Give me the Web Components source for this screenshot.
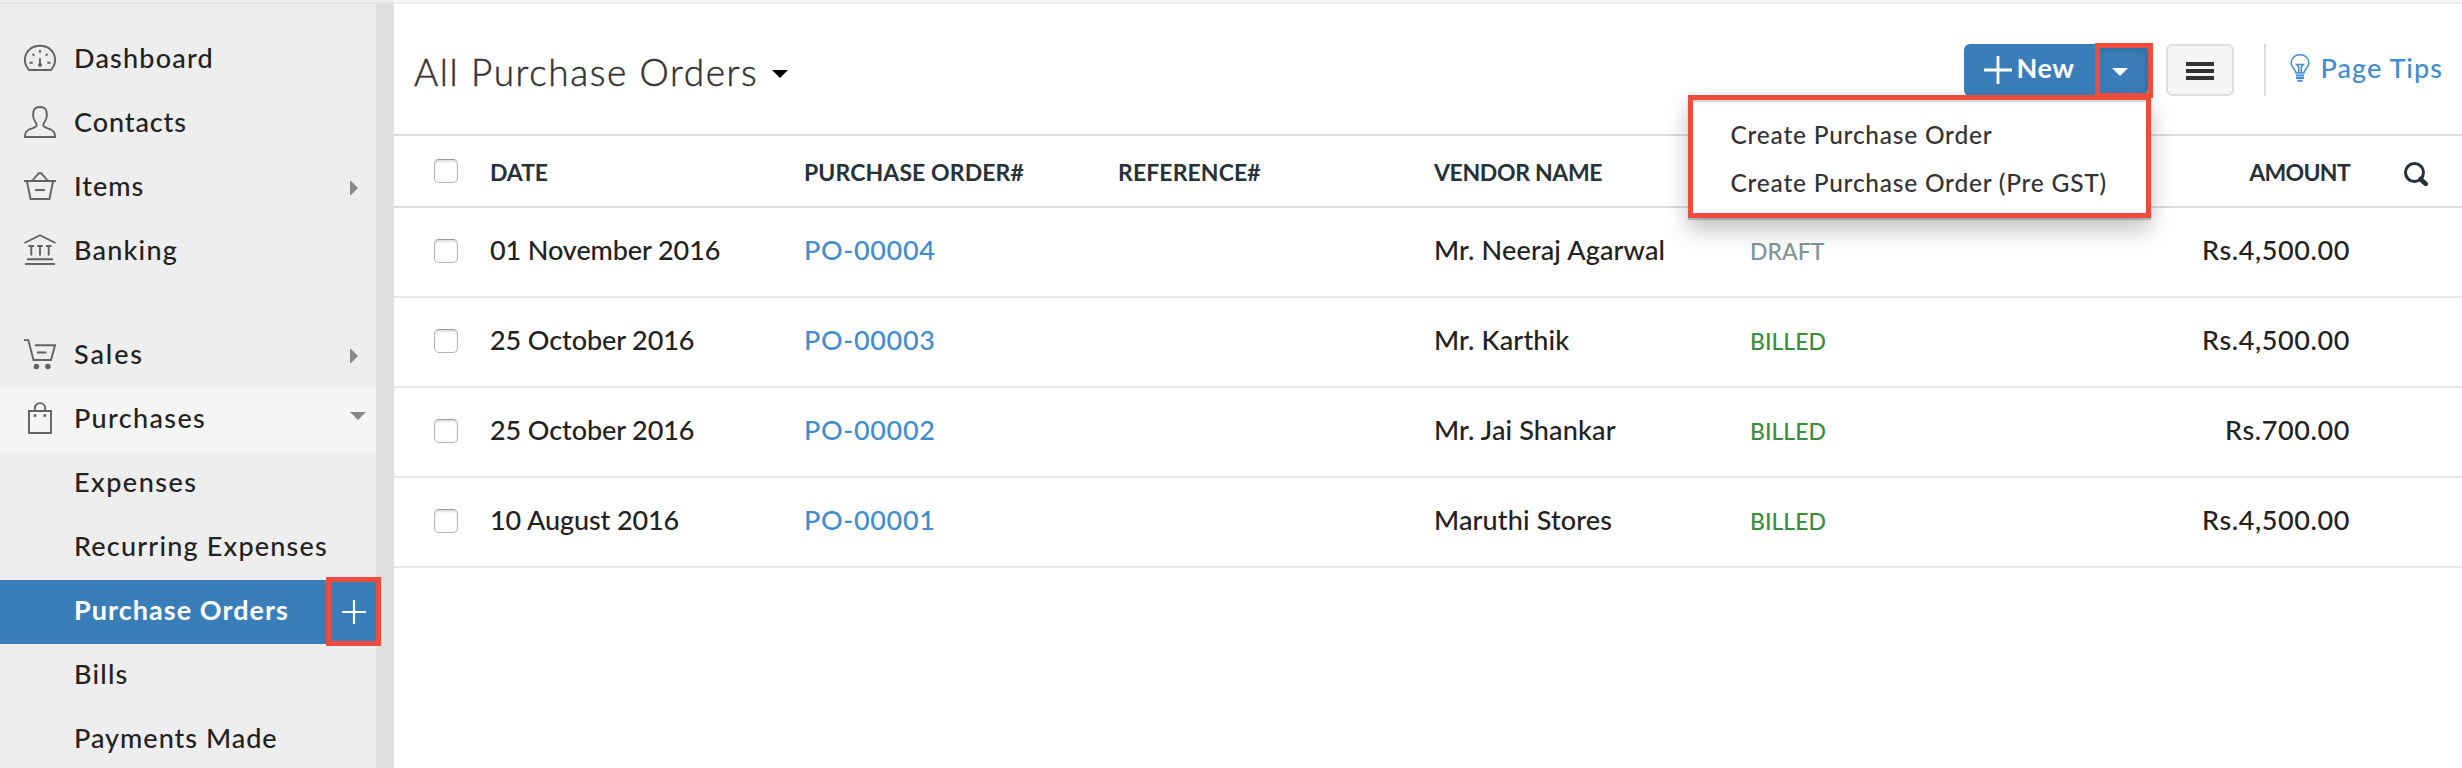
<!DOCTYPE html>
<html lang="en">
<head>
<meta charset="utf-8">
<title>Purchase Orders</title>
<style>
  html, body { margin: 0; height: 100%; }
  body {
    background: #fff;
    color: #222;
    font: 500 27px/1.2 Lato, "Liberation Sans", sans-serif;
    overflow: hidden;
  }
</style>
</head>
<body>
<books-app>
  <side-nav slot="nav">
    <nav-item icon="dashboard">Dashboard</nav-item>
    <nav-item icon="contacts" style="--track: .9px">Contacts</nav-item>
    <nav-item icon="items" caret="right" style="--track: 1px">Items</nav-item>
    <nav-item icon="banking">Banking</nav-item>
    <nav-item icon="sales" caret="right" class="gap" style="--track: 1.9px">Sales</nav-item>
    <nav-item icon="purchases" caret="down" open style="--track: 1.35px">Purchases</nav-item>
    <nav-item style="--track: 1.5px">Expenses</nav-item>
    <nav-item>Recurring Expenses</nav-item>
    <nav-item active style="--track: 1.05px">Purchase Orders</nav-item>
    <nav-item>Bills</nav-item>
    <nav-item style="--track: 1px">Payments Made</nav-item>
  </side-nav>
  <list-header slot="header">
    All Purchase Orders
    <new-button slot="actions">
      New
      <menu-item slot="menu">Create Purchase Order</menu-item>
      <menu-item slot="menu">Create Purchase Order (Pre GST)</menu-item>
    </new-button>
    <list-options slot="actions"></list-options>
    <page-tips slot="actions">Page Tips</page-tips>
  </list-header>
  <order-table></order-table>
</books-app>

<script>
const ICONS = {
  dashboard: `<path d="M5 26C2 22.500 .9 19.500 .9 16C.9 7.500 7.500 1.800 16 1.800S31.100 7.500 31.100 16C31.100 19.500 30 22.500 27 26Z"/>
    <path d="M16 6v3M8.500 9.800l1.800 1.800M23.500 9.800l-1.800 1.800M5.500 18.700h3.200M23.300 18.700h3.200M16 14v6"/>
    <circle cx="16" cy="21" r="2" fill="currentColor" stroke="none"/>`,
  contacts: `<path d="M1 29C.9 25 2 23 5 21.500C8 20 12 19.800 12.700 17.500C13.300 15 9.500 13 9.200 8.500C8.800 2 10.500-1 16-1S23.200 2 22.800 8.500C22.500 13 18.700 15 19.300 17.500C20 19.800 24 20 27 21.500C30 23 31.100 25 31 29Z"/>`,
  items: `<path d="M0 9h32M3 9.500L6.500 27h19L29 9.500M8.500 8.500l6-7Q16 .4 17.500 1.500l6 7M11 18h10"/>`,
  banking: `<path d="M.5 7L16-.8L31.500 7M4.500 10h5.500M13.200 10h5.600M22 10h5.500M7.300 10v9.500M16 10v9.500M24.700 10v9.500M3 23.300h26M1 28h30"/>`,
  sales: `<path d="M0 .1h4.300L9.500 20H27L31 5.200H11M13 12.500h9.500"/>
    <circle cx="12.400" cy="26.500" r="2.800" fill="currentColor" stroke="none"/><circle cx="23.900" cy="26.500" r="2.800" fill="currentColor" stroke="none"/>`,
  purchases: `<path d="M5 7h22v22H5ZM10.800 7V4.500C10.800-2.700 21.200-2.700 21.200 4.500V7"/>
    <circle cx="11" cy="11.500" r="1.500" fill="currentColor" stroke="none"/><circle cx="20.800" cy="11.500" r="1.500" fill="currentColor" stroke="none"/>`
};

class BooksApp extends HTMLElement {
  constructor() {
    super();
    this.attachShadow({ mode: "open" }).innerHTML = `
      <style>
        :host { display: flex; height: 768px; }
        main { flex: 1; min-width: 0; border-top: 2px solid #f6f6f6; }
        main::before { content: ""; display: block; height: 2px; background: #eee; }
      </style>
      <slot name="nav"></slot>
      <main><slot name="header"></slot><slot></slot></main>
    `;
  }
}

class SideNav extends HTMLElement {
  constructor() {
    super();
    this.attachShadow({ mode: "open" }).innerHTML = `
      <style>
        :host { display: flex; flex-direction: column; width: 394px; height: 768px; overflow: hidden; }
        .edge { flex: none; height: 2px; background: #f0f0f0; border-bottom: 2px solid #e4e4e4; }
        .body { flex: 1; display: flex; min-height: 0; }
        nav { width: 376px; padding-top: 24px; background: #eee; box-sizing: border-box; }
        .track { flex: 1; background: #dfdfdf; }
        ::slotted(.gap) { margin-top: 40px; }
      </style>
      <div class="edge"></div>
      <div class="body"><nav><slot></slot></nav><div class="track"></div></div>
    `;
  }
}

class NavItem extends HTMLElement {
  constructor() {
    super();
    this.attachShadow({ mode: "open" });
  }

  connectedCallback() {
    const icon = ICONS[this.getAttribute("icon")] || "";
    const caret = this.getAttribute("caret");
    this.shadowRoot.innerHTML = `
      <style>
        :host {
          display: flex; align-items: center; position: relative;
          height: 64px; padding-left: 24px; box-sizing: border-box;
        }
        :host([open]) { background: #f5f5f5; }
        :host([active]) { background: #3a7eb9; color: #fff; font-weight: 700; }
        svg.icon { width: 32px; height: 32px; margin-right: 18px; overflow: visible; fill: none; stroke: currentColor; stroke-width: 1.9; color: #636363; }
        .label { flex: 1; padding-bottom: 3px; letter-spacing: var(--track, 1.2px); white-space: nowrap; }
        .right { margin-right: 18px; border: 8px solid transparent; border-left-color: #888; border-right: 0; }
        .down { margin: 0 10px 8px 0; border: 8px solid transparent; border-top-color: #888; border-bottom: 0; }
        .add { width: 24px; height: 24px; margin-right: 10px; stroke: #fff; stroke-width: 2.200; stroke-linecap: round; }
        .mark { position: absolute; left: 326px; top: -3px; width: 55px; height: 69px; box-sizing: border-box; border: 5px solid #ef4c3e; z-index: 1; }
      </style>
      <svg class="icon" viewBox="0 0 32 32">${icon}</svg>
      <span class="label"><slot></slot></span>
      ${caret ? `<i class="${caret}"></i>` : ""}
      ${this.hasAttribute("active") ? `<svg class="add" viewBox="0 0 24 24"><path d="M12 1v22M1 12h22"/></svg><div class="mark"></div>` : ""}
    `;
  }
}

class ListHeader extends HTMLElement {
  constructor() {
    super();
    this.attachShadow({ mode: "open" }).innerHTML = `
      <style>
        :host {
          display: flex; align-items: center; justify-content: space-between;
          height: 132px; padding: 0 19px 0 20px; box-sizing: border-box; border-bottom: 2px solid #ddd;
        }
        h1 {
          display: flex; align-items: center; margin: 0; padding-top: 7px;
          font-size: 37px; font-weight: 300; letter-spacing: 1.6px; color: #333; -webkit-text-stroke: .5px #333;
        }
        h1 i { margin: 4px 0 0 14px; border: 8px solid transparent; border-top-color: #000; border-bottom: 0; }
        .actions { display: flex; align-items: center; padding-top: 2px; }
      </style>
      <h1><slot></slot><i></i></h1>
      <div class="actions"><slot name="actions"></slot></div>
    `;
  }
}

class NewButton extends HTMLElement {
  constructor() {
    super();
    this.attachShadow({ mode: "open" }).innerHTML = `
      <style>
        :host { display: flex; position: relative; width: 184px; height: 52px; margin-right: 18px; color: #fff; }
        .main { display: flex; align-items: center; width: 131px; padding-left: 20px; box-sizing: border-box; background: #3a7eb9; border-radius: 6px 0 0 6px; font-weight: 700; letter-spacing: .5px; }
        .main svg { width: 28px; height: 28px; margin-right: 5px; stroke: #fff; stroke-width: 2.800; }
        .main span { padding-bottom: 3px; }
        .toggle { flex: 1; display: flex; align-items: center; justify-content: center; padding-top: 4px; padding-right: 3px; box-sizing: border-box; background: #3a7eb9; border-radius: 0 6px 6px 0; box-shadow: inset 0 6px 10px rgba(0, 0, 0, .16); }
        .toggle i { border: 8px solid transparent; border-top-color: #fff; border-bottom: 0; }
        .mark { position: absolute; left: 131px; top: -1px; width: 58px; height: 55px; box-sizing: border-box; border: 5px solid #ef4c3e; z-index: 3; }
        .menu {
          position: absolute; right: -3px; top: 51px; z-index: 2; width: 463px; height: 123px; box-sizing: border-box;
          padding: 11px 0 0 38px; border: 5px solid #ef4c3e; background: #fff;
          box-shadow: inset 0 2px #d5d5d5, 0 2px 1px rgba(0, 0, 0, .2), 0 12px 22px rgba(0, 0, 0, .24);
        }
      </style>
      <div class="main">
        <svg viewBox="0 0 28 28"><path d="M14 0v28M0 14h28"/></svg>
        <span><slot></slot></span>
      </div>
      <div class="toggle"><i></i></div>
      <div class="mark"></div>
      <div class="menu"><slot name="menu"></slot></div>
    `;
  }
}

class MenuItem extends HTMLElement {
  constructor() {
    super();
    this.attachShadow({ mode: "open" }).innerHTML = `
      <style>
        :host { display: block; color: #333; font-size: 24.5px; line-height: 48px; letter-spacing: .76px; white-space: nowrap; }
      </style>
      <slot></slot>
    `;
  }
}

class ListOptions extends HTMLElement {
  constructor() {
    super();
    this.attachShadow({ mode: "open" }).innerHTML = `
      <style>
        :host {
          display: flex; flex-direction: column; align-items: center; justify-content: center; gap: 3px;
          width: 68px; height: 52px; padding-top: 1px; box-sizing: border-box;
          background: #f5f5f5; border: 2px solid #ddd; border-radius: 6px;
        }
        i { width: 28px; height: 4px; background: #333; }
      </style>
      <i></i><i></i><i></i>
    `;
  }
}

class PageTips extends HTMLElement {
  constructor() {
    super();
    this.attachShadow({ mode: "open" }).innerHTML = `
      <style>
        :host {
          display: flex; align-items: center; height: 52px; margin-left: 30px; padding-left: 24px;
          border-left: 2px solid #ddd; color: #408dcf; letter-spacing: 1.05px;
        }
        svg { width: 20px; height: 28px; margin: 0 11px 4px 0; fill: none; stroke: currentColor; stroke-width: 1.500; }
        span { padding-bottom: 3px; }
      </style>
      <svg viewBox="0 0 20 28">
        <path d="M6 19C6 15.500 1.200 14 1.200 9C1.200 4 5 .8 10 .8S18.800 4 18.800 9C18.800 14 14 15.500 14 19Z"/>
        <path d="M8.700 19V13L6.700 10.500H13.300L11.300 13V19"/>
        <path d="M6 21.500h8M6 24h8M7.500 26.700h5" stroke-width="1.900"/>
      </svg>
      <span><slot></slot></span>
    `;
  }
}

class OrderTable extends HTMLElement {
  constructor() {
    super();
    this.attachShadow({ mode: "open" });
    this._orders = [
      ["01 November 2016", "PO-00004", "Mr. Neeraj Agarwal", "DRAFT", "Rs.4,500.00"],
      ["25 October 2016", "PO-00003", "Mr. Karthik", "BILLED", "Rs.4,500.00"],
      ["25 October 2016", "PO-00002", "Mr. Jai Shankar", "BILLED", "Rs.700.00"],
      ["10 August 2016", "PO-00001", "Maruthi Stores", "BILLED", "Rs.4,500.00"]
    ];
  }

  connectedCallback() {
    this.shadowRoot.innerHTML = `
      <style>
        :host { display: block; }
        .row {
          display: grid; grid-template-columns: 56px 314px 314px 316px 315px 1fr 112px; align-items: baseline; align-content: center;
          height: 90px; padding: 0 0 3px 40px; box-sizing: border-box; border-bottom: 2px solid #e6e6e6; white-space: nowrap;
        }
        .head { height: 72px; padding: 3px 0 0 40px; border-color: #ddd; font-size: 23px; font-weight: 700; letter-spacing: .1px; color: #263238; }
        .check {
          align-self: center; width: 24px; height: 24px; box-sizing: border-box; margin-top: 1px;
          border: 1.5px solid #b4b4b4; border-top-color: #999; border-radius: 5px; box-shadow: inset 0 2px 2px #e2e2e2;
        }
        .head .check { margin-top: -3px; }
        .date { letter-spacing: -.1px; }
        .vendor { letter-spacing: .15px; }
        .head .vendor { letter-spacing: -.35px; }
        a { color: #408dcf; letter-spacing: .65px; }
        .status { font-size: 23px; color: #388e3c; }
        .draft { color: #839496; }
        .amount { text-align: right; letter-spacing: .6px; }
        .head .amount { letter-spacing: -.7px; }
        .cells { grid-column: 6; display: flex; justify-content: space-between; align-items: baseline; }
        .cells .status { margin-left: 1px; }
        svg { align-self: center; width: 24px; height: 24px; margin: 2px 0 0 54px; fill: none; stroke: #263238; }
      </style>
      <div class="row head">
        <i class="check"></i><span class="date">DATE</span><span>PURCHASE ORDER#</span><span>REFERENCE#</span>
        <span class="vendor">VENDOR NAME</span><span class="amount">AMOUNT</span>
        <svg viewBox="0 0 24 24"><circle cx="10.500" cy="10.500" r="9" stroke-width="3"/><path d="M16.500 17l5.300 5" stroke-width="4.500" stroke-linecap="round"/></svg>
      </div>
      ${this._orders.map((order) => this._row(order)).join("")}
    `;
  }

  _row([date, number, vendor, status, amount]) {
    return `
      <div class="row">
        <i class="check"></i><span class="date">${date}</span><a>${number}</a><span></span>
        <span class="vendor">${vendor}</span>
        <div class="cells">
          <span class="status ${status.toLowerCase()}">${status}</span><span class="amount">${amount}</span>
        </div>
      </div>`;
  }
}

customElements.define("books-app", BooksApp);
customElements.define("side-nav", SideNav);
customElements.define("nav-item", NavItem);
customElements.define("list-header", ListHeader);
customElements.define("new-button", NewButton);
customElements.define("menu-item", MenuItem);
customElements.define("list-options", ListOptions);
customElements.define("page-tips", PageTips);
customElements.define("order-table", OrderTable);
</script>
</body>
</html>
